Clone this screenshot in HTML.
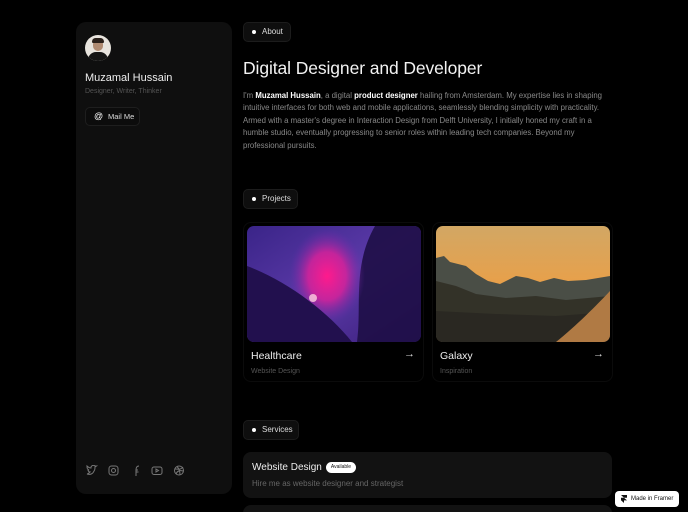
<!DOCTYPE html>
<html><head><meta charset="utf-8"><style>
*{margin:0;padding:0;box-sizing:border-box}
html,body{width:688px;height:512px;overflow:hidden}
body{background:#000;font-family:"Liberation Sans",sans-serif;color:#fff;position:relative}
.abs{position:absolute}
.side{left:76px;top:22px;width:156px;height:472px;background:#0f0f0f;border-radius:10px}
.pill{position:absolute;height:20px;background:#0e0e0e;border:1px solid #1c1c1c;border-radius:5px;font-size:8px;color:#ddd;line-height:18px;padding-left:18px}
.pill:before{content:"";position:absolute;left:8px;top:7px;width:4px;height:4px;border-radius:50%;background:#fff}
.t{font-size:7.8px;line-height:12.4px;color:#888;white-space:nowrap}
.t b{color:#fff;font-weight:bold}
.card{position:absolute;top:222px;width:181px;height:160px;border:1px solid #0b0b0b;border-radius:8px}
.ct{position:absolute;left:7px;top:127px;font-size:10.5px;color:#eee}
.cs{position:absolute;left:7px;top:145px;font-size:7px;color:#555}
.ar{position:absolute;right:8px;top:125px;font-size:11px;color:#ddd}
</style></head><body>
<div class="abs side">
 <div class="abs" style="left:9px;top:13px;width:26px;height:26px;border-radius:50%;background:#e8e4de;overflow:hidden">
  <div class="abs" style="left:8px;top:4px;width:10px;height:12px;border-radius:5px;background:#b08b72"></div>
  <div class="abs" style="left:7px;top:3px;width:12px;height:5px;border-radius:5px 5px 2px 2px;background:#2a201a"></div>
  <div class="abs" style="left:3px;top:17px;width:20px;height:12px;border-radius:8px 8px 0 0;background:#141414"></div>
 </div>
 <div class="abs" style="left:9px;top:50px;font-size:11px;color:#eee">Muzamal Hussain</div>
 <div class="abs" style="left:9px;top:66px;font-size:7px;color:#555">Designer, Writer, Thinker</div>
 <div class="abs" style="left:9px;top:85px;width:55px;height:19px;border:1px solid #1e1e1e;border-radius:5px;background:#0c0c0c;font-size:7.5px;color:#ddd;line-height:17px;padding-left:22px">Mail Me<span class="abs" style="left:8px;top:0;font-size:9px;color:#fff">@</span></div>
 <svg class="abs" style="left:10px;top:443px" width="110" height="12" fill="none" stroke="#777" stroke-width="1">
  <path d="M1 9c3 1 6 0 7-3 1-1 1-3 1-4l1.5-1-1.5 0c-1-1-3-1-4 1 0 1 0 1 0 1C3 3 2 2 1 1c0 2 0 3 2 4H2c0 1 1 2 2 2-1 1-2 2-3 2z"/>
  <rect x="23" y="1" width="9" height="9" rx="2.5"/><circle cx="27.5" cy="5.5" r="2"/>
  <path d="M50 11V5h2M50 7h2.5M50 5c0-3 1-4 3-4"/>
  <rect x="66" y="2" width="10" height="7.5" rx="2"/><path d="M70 4l2.5 1.5L70 7z"/>
  <circle cx="93" cy="5.5" r="4.5"/><path d="M89 4c3 0 6 1 8-2M90 9c1-3 4-4 7-3M91 1.5c2 2 3 5 3 8.5"/>
 </svg>
</div>

<div class="pill" style="left:243px;top:22px;width:48px">About</div>
<div class="abs" style="left:243px;top:58px;font-size:17.5px;color:#f2f2f2;letter-spacing:-0.1px">Digital Designer and Developer</div>
<div class="t abs" style="left:243px;top:90px">I'm <b>Muzamal Hussain</b>, a digital <b>product designer</b> hailing from Amsterdam. My expertise lies in shaping<br>intuitive interfaces for both web and mobile applications, seamlessly blending simplicity with practicality.<br>Armed with a master's degree in Interaction Design from Delft University, I initially honed my craft in a<br>humble studio, eventually progressing to senior roles within leading tech companies. Beyond my<br>professional pursuits.</div>

<div class="pill" style="left:243px;top:189px;width:55px">Projects</div>

<div class="card" style="left:243px">
 <svg class="abs" style="left:3px;top:3px;border-radius:7px" width="174" height="116" viewBox="0 0 174 116">
  <defs>
   <radialGradient id="g1" cx="0.5" cy="0.5" r="0.5"><stop offset="0" stop-color="#ff1a8c"/><stop offset="0.5" stop-color="#e0209a" stop-opacity="0.8"/><stop offset="1" stop-color="#6a2cb0" stop-opacity="0"/></radialGradient>
   <linearGradient id="b1" x1="0" y1="0" x2="1" y2="1"><stop offset="0" stop-color="#3a2488"/><stop offset="0.5" stop-color="#5b3aa8"/><stop offset="1" stop-color="#3a1e7a"/></linearGradient>
  </defs>
  <rect width="174" height="116" fill="url(#b1)"/>
  <path d="M128 0H174V116H110C115 80 105 40 128 0z" fill="#1e0e46" opacity="0.9"/>
  <ellipse cx="80" cy="50" rx="38" ry="48" fill="url(#g1)"/>
  <path d="M0 40C40 55 80 85 105 116H0z" fill="#22104e"/>
  <circle cx="66" cy="72" r="4" fill="#ffd0e0" opacity="0.8"/>
 </svg>
 <div class="ct">Healthcare</div><div class="cs">Website Design</div><div class="ar">→</div>
</div>
<div class="card" style="left:432px">
 <svg class="abs" style="left:3px;top:3px;border-radius:7px" width="174" height="116" viewBox="0 0 174 116">
  <defs><linearGradient id="s2" x1="0" y1="0" x2="0" y2="1"><stop offset="0" stop-color="#d2a764"/><stop offset="0.5" stop-color="#e8a04a"/><stop offset="1" stop-color="#c0783a"/></linearGradient></defs>
  <rect width="174" height="116" fill="url(#s2)"/>
  <path d="M0 32L8 30 14 36 22 38 30 40 40 48 52 55 64 58 80 50 92 52 104 56 118 52 132 55 150 54 174 50V116H0z" fill="#4a4e46"/>
  <path d="M0 55L20 60 40 68 70 72 100 70 130 74 174 70V116H0z" fill="#333228"/>
  <path d="M0 85L60 88 120 90 174 86V116H0z" fill="#2a2822"/>
  <path d="M174 65C160 80 140 100 120 116H174z" fill="#b07a44"/>
 </svg>
 <div class="ct">Galaxy</div><div class="cs">Inspiration</div><div class="ar">→</div>
</div>

<div class="pill" style="left:243px;top:420px;width:56px">Services</div>
<div class="abs" style="left:243px;top:452px;width:369px;height:46px;background:#121212;border-radius:8px">
 <div class="abs" style="left:9px;top:10px;font-size:10px;color:#eee">Website Design</div>
 <div class="abs" style="left:83px;top:10px;width:30px;height:11px;border-radius:6px;background:#fff;color:#111;font-size:5px;text-align:center;line-height:11px">Available</div>
 <div class="abs" style="left:9px;top:27px;font-size:8px;color:#666">Hire me as website designer and strategist</div>
</div>
<div class="abs" style="left:243px;top:505px;width:369px;height:20px;background:#121212;border-radius:8px"></div>
<div class="abs" style="left:615px;top:491px;width:64px;height:16px;background:#fff;border-radius:4px;color:#111;font-size:6px;line-height:16px;padding-left:16px">Made in Framer<svg class="abs" style="left:6px;top:4px" width="6" height="8"><path d="M0 0h6v2.7H3zM0 2.7h3l3 2.7H0zM0 5.3h3V8z" fill="#111"/></svg></div>
</body></html>
